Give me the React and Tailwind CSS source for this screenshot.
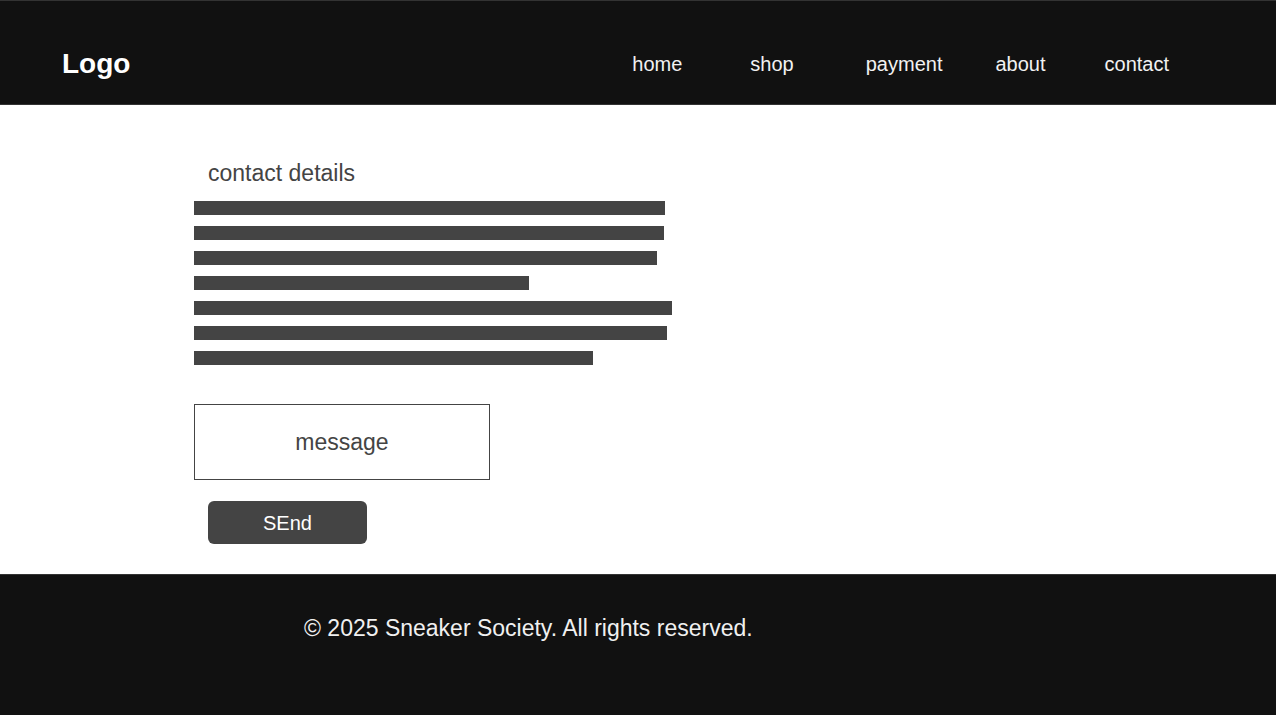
import React from 'react';

const links = [
    { label: 'home', gap: 'ml-0' },
    { label: 'shop', gap: 'ml-[68px]' },
    { label: 'payment', gap: 'ml-[72px]' },
    { label: 'about', gap: 'ml-[53px]' },
    { label: 'contact', gap: 'ml-[59px]' },
];

const bars = [471, 470, 463, 335, 478, 473, 399];

export default function App() {
    return (
        <div className="min-h-[715px] flex flex-col bg-white font-['Liberation_Sans',Arial,sans-serif]">
            {/* header */}
            <header className="h-[105px] flex items-start pl-[62px] pr-[107px] bg-[#111] border-y border-[#333]">
                <div className="mt-[42px] text-[28px] font-bold text-white">Logo</div>
                <nav className="ml-auto mt-[48px] flex items-baseline">
                    {links.map((l) => (
                        <a key={l.label} href="#" className={`${l.gap} text-[20px] text-[#f2f2f2]`}>
                            {l.label}
                        </a>
                    ))}
                </nav>
            </header>

            {/* contact section */}
            <main className="h-[469px] pl-[194px] pt-[55px]">
                <h2 className="pl-[14px] text-[23px] leading-[26px] text-[#444]">contact details</h2>
                <div className="mt-[15px] flex flex-col gap-[11px]">
                    {bars.map((w, i) => (
                        <div key={i} className="h-[14px] bg-[#444]" style={{ width: w }} />
                    ))}
                </div>
                <div className="mt-[39px] w-[296px] h-[76px] border border-[#444] flex items-center justify-center text-[23px] text-[#444]">
                    message
                </div>
                <button className="mt-[21px] ml-[14px] w-[159px] h-[43px] rounded-md bg-[#444] text-white text-[20px]">
                    SEnd
                </button>
            </main>

            {/* footer */}
            <footer className="h-[141px] bg-[#111] border-t border-[#333] pt-[36px] pl-[304px]">
                <p className="text-[23px] text-[#f0f0f0]">© 2025 Sneaker Society. All rights reserved.</p>
            </footer>
        </div>
    );
}
